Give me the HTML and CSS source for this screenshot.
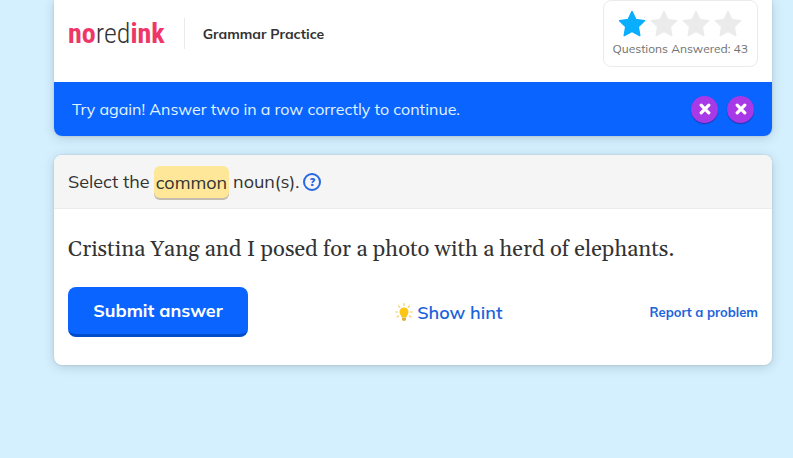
FILE: index.html
```html
<!DOCTYPE html>
<html lang="en">
<head>
<meta charset="utf-8">
<meta name="viewport" content="width=device-width, initial-scale=1">
<title>Grammar Practice</title>
<link rel="stylesheet" href="styles.css">
</head>
<body>
<svg class="defs" aria-hidden="true">
  <symbol id="star" viewBox="0 0 28 28"><path d="M14 1.6 17.8 9.500 26.400 10.700 20.200 16.800 21.700 25.500 14 21.400 6.300 25.500 7.800 16.800 1.600 10.700 10.200 9.500Z" fill="currentColor" stroke="currentColor" stroke-width="1.600" stroke-linejoin="round"/></symbol>
  <symbol id="cross" viewBox="0 0 12 12"><path d="M2.200 2.200 9.800 9.800M9.800 2.200 2.200 9.800" stroke="currentColor" stroke-width="3.200" stroke-linecap="round"/></symbol>
</svg>
<main class="page">
  <section class="card">
    <header class="top">
      <a class="logo" href="#"><b>no</b>red<b>ink</b></a>
      <h1 class="title">Grammar Practice</h1>
      <div class="score">
        <div class="stars">
          <svg class="star on"><use href="#star"/></svg>
          <svg class="star"><use href="#star"/></svg>
          <svg class="star"><use href="#star"/></svg>
          <svg class="star"><use href="#star"/></svg>
        </div>
        <p class="count">Questions Answered: 43</p>
      </div>
    </header>
    <div class="banner">
      <p class="message">Try again! Answer two in a row correctly to continue.</p>
      <span class="mark"><svg class="cross"><use href="#cross"/></svg></span>
      <span class="mark"><svg class="cross"><use href="#cross"/></svg></span>
    </div>
  </section>
  <section class="card">
    <div class="prompt">
      <span>Select the</span>
      <span class="term">common</span>
      <span>noun(s).</span>
      <button class="help" type="button" aria-label="Help">?</button>
    </div>
    <div class="question">
      <p class="sentence">Cristina Yang and I posed for a photo with a herd of elephants.</p>
      <div class="actions">
        <button class="submit" type="button">Submit answer</button>
        <button class="hint" type="button">
          <svg class="bulb" viewBox="0 0 18 20" aria-hidden="true">
            <path d="M9 5.500a4.500 4.500 0 0 0-4.500 4.500c0 2.200 1.800 3.200 2 5.200h5c.2-2 2-3 2-5.200A4.500 4.500 0 0 0 9 5.500Z" fill="#fdc614"/>
            <path d="M7 15.500h4v2.500q-2 2-4 0Z" fill="#e0b03c"/>
            <path d="M9 1.500v2M3.500 3.800l1.300 1.400M14.500 3.800l-1.300 1.400M.6 10h2M15.400 10h2M2 15l1.600-1M16 15l-1.600-1" stroke="#f3cf59" stroke-width="1.200" stroke-linecap="round"/>
          </svg>
          Show hint
        </button>
        <a class="report" href="#">Report a problem</a>
      </div>
    </div>
  </section>
</main>
</body>
</html>
```
FILE: styles.css
```css
* { box-sizing: border-box; }

body {
  margin: 0;
  background: #d4f0ff;
  color: #333;
  font-family: Mulish, Muli, Lato, sans-serif;
}

h1, p { margin: 0; }
a { text-decoration: none; }
button { padding: 0; border: 0; background: none; font: inherit; cursor: pointer; }
.defs { position: absolute; width: 0; height: 0; }

.page {
  display: flex;
  flex-direction: column;
  gap: 19px;
  padding: 0 21px 24px 54px;
}

.card {
  background: #fff;
  border-radius: 8px;
  box-shadow: 0 0 2px rgba(0, 0, 0, .16), 0 2px 12px rgba(0, 0, 0, .16);
}
.card:first-child { border-radius: 0 0 8px 8px; }

.top { display: flex; align-items: flex-start; padding: 0 14px 15px; }

.logo {
  margin-top: 18px;
  padding-right: 19px;
  border-right: 1px solid #ebebeb;
  color: #333;
  font-family: "Roboto Condensed", "Open Sans Condensed", "Arial Narrow", Roboto, sans-serif;
  font-size: 28px;
  line-height: 31px;
  font-weight: 300;
}
.logo b { color: #ee3768; font-weight: 700; }

.title { margin: 24px auto 0 18px; font-size: 14px; line-height: 20px; font-weight: 700; }

.score {
  height: 67px;
  padding: 9px 9px 0;
  border: 1px solid #ebebeb;
  border-radius: 8px;
}
.stars { display: flex; justify-content: center; gap: 4px; }
.star { width: 28px; height: 28px; color: #ebebeb; }
.star.on { color: #09aeff; }
.count { color: #727272; font-size: 12px; line-height: 22px; }

.banner {
  display: flex;
  align-items: center;
  gap: 9px;
  height: 54px;
  padding: 0 18px;
  border-radius: 0 0 8px 8px;
  background: #0a64ff;
  color: #e0f5ff;
}
.message { margin-right: auto; font-size: 16px; line-height: 24px; }
.mark {
  display: grid;
  place-items: center;
  width: 27px;
  height: 27px;
  border-radius: 50%;
  background: #a839e6;
  box-shadow: 0 1px 1px rgba(50, 20, 120, .6);
  color: #fff;
}
.cross { width: 12px; height: 12px; }

.prompt {
  display: flex;
  align-items: center;
  gap: 4px;
  height: 54px;
  padding: 0 14px;
  border-bottom: 1px solid #ebebeb;
  border-radius: 8px 8px 0 0;
  background: #f5f5f5;
  font-size: 18px;
  line-height: 24px;
}
.term {
  padding: 5px 2px 3px;
  border-radius: 6px;
  background: #fee798;
  box-shadow: 0 2px 0 #c4bcae;
}
.help {
  width: 18px;
  height: 18px;
  border: 2px solid #2867e0;
  border-radius: 50%;
  color: #2867e0;
  font-size: 12px;
  line-height: 14px;
  font-weight: 900;
}

.question { padding: 24px 14px 28px; }
.sentence {
  font-family: Gelasio, Georgia, "Liberation Serif", serif;
  font-size: 22px;
  line-height: 34px;
}
.actions { display: flex; align-items: center; justify-content: space-between; margin-top: 20px; }
.submit {
  width: 180px;
  height: 50px;
  border-bottom: 3px solid #004cc9;
  border-radius: 8px;
  background: #0a64ff;
  color: #fff;
  font-size: 18px;
  font-weight: 700;
}
.hint {
  display: flex;
  align-items: center;
  gap: 4px;
  color: #1a63dc;
  font-size: 18px;
  font-weight: 600;
}
.bulb { width: 18px; height: 20px; }
.report { color: #1a63dc; font-size: 13px; font-weight: 700; }
```
